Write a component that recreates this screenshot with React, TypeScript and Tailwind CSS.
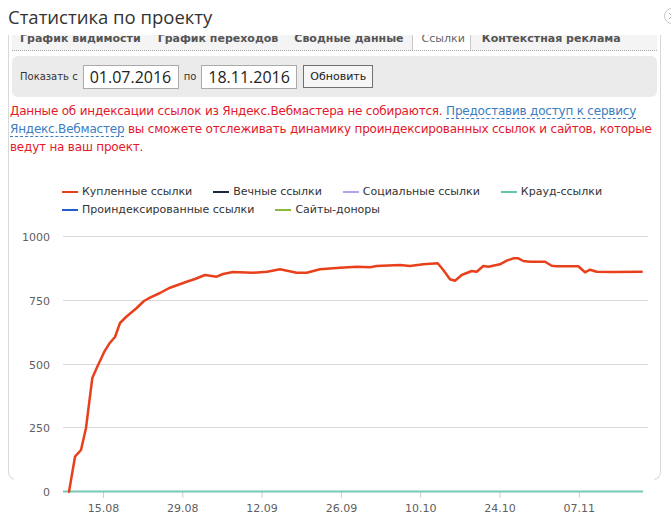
import React from "react";

const LEGEND_ROWS = [
  [
    { label: "Купленные ссылки", color: "bg-[#e8401c]" },
    { label: "Вечные ссылки", color: "bg-[#1c2a40]" },
    { label: "Социальные ссылки", color: "bg-[#b3a4ee]" },
    { label: "Крауд-ссылки", color: "bg-[#5fc6a8]" },
  ],
  [
    { label: "Проиндексированные ссылки", color: "bg-[#1f5fd6]" },
    { label: "Сайты-доноры", color: "bg-[#8db83c]" },
  ],
];

// page coordinates, traced off the chart
const BOUGHT: [number, number][] = [
  [69, 491.7], [75, 456.7], [81, 450], [86, 428], [92.3, 378], [96.7, 368],
  [104.3, 351.7], [110, 342.7], [115, 337], [120, 323], [126, 317], [136.7, 308],
  [144, 301], [150, 297.7], [160, 293], [170, 287.7], [186.7, 281.7], [195, 279],
  [205, 275], [216.7, 276.7], [223, 274], [233, 272], [253, 272.7], [267, 271.7],
  [280, 269.3], [296.7, 272.7], [306.7, 272.7], [320, 269.3], [340, 267.7],
  [356.7, 266.7], [370, 267.3], [376.7, 266], [400, 265], [410, 266], [423.3, 264.3],
  [437.7, 263.3], [443.3, 270], [450, 279.3], [455, 280.7], [461.7, 275], [471.7, 271],
  [476.7, 271.7], [483.3, 266], [488.3, 266.7], [500, 264.3], [506.7, 260.7],
  [513.3, 258.3], [518.3, 258.3], [523.3, 261], [530, 261.7], [545, 261.7],
  [551.7, 265.7], [556.7, 266.3], [578.3, 266.3], [585, 272.3], [590, 269.7],
  [596.7, 271.7], [613.3, 272], [641.7, 271.7],
];

const Y_TICKS = [
  { v: "1000", y: 236.5 },
  { v: "750", y: 300.5 },
  { v: "500", y: 364.5 },
  { v: "250", y: 427.5 },
  { v: "0", y: 491.5 },
];

const X_TICKS = [
  { v: "15.08", x: 103.5 },
  { v: "29.08", x: 182.8 },
  { v: "12.09", x: 262.1 },
  { v: "26.09", x: 341.4 },
  { v: "10.10", x: 420.7 },
  { v: "24.10", x: 500 },
  { v: "07.11", x: 579.3 },
];

function Chart() {
  const line = BOUGHT.map(([x, y]) => `${x},${y}`).join(" ");
  return (
    <svg
      width={640}
      height={291}
      viewBox="14 225 640 291"
      className="block ml-[5px] mt-[6px] shrink-0"
    >
      <rect x={14} y={225} width={640} height={291} fill="#fff" />
      {Y_TICKS.slice(0, 4).map((t) => (
        <line key={t.v} x1={63} x2={648} y1={t.y} y2={t.y} stroke="#d8d8d8" strokeWidth={1} />
      ))}
      {Y_TICKS.map((t) => (
        <text
          key={t.v}
          x={50}
          y={t.y + 4}
          textAnchor="end"
          fontSize={11}
          fill="#606060"
          fontFamily="'DejaVu Sans', Verdana, sans-serif"
        >
          {t.v}
        </text>
      ))}
      {X_TICKS.map((t) => (
        <g key={t.v}>
          <line x1={t.x} x2={t.x} y1={492} y2={498} stroke="#cfcfcf" strokeWidth={1} />
          <text
            x={t.x}
            y={512}
            textAnchor="middle"
            fontSize={11}
            fill="#606060"
            fontFamily="'DejaVu Sans', Verdana, sans-serif"
          >
            {t.v}
          </text>
        </g>
      ))}
      <line x1={63} x2={643} y1={491.5} y2={491.5} stroke="#78c8b8" strokeWidth={2} />
      <polyline
        points={line}
        fill="none"
        stroke="#e8401c"
        strokeWidth={2.5}
        strokeLinejoin="round"
        strokeLinecap="round"
      />
    </svg>
  );
}

export default function App() {
  return (
    <div className="relative w-[671px] h-[516px] overflow-hidden bg-white text-[#333] font-['DejaVu_Sans',Verdana,sans-serif]">
      {/* Title */}
      <div className="h-[35px] pl-[8px] pt-[3px] text-[18.5px] leading-[28px] text-[#333] font-['Open_Sans',sans-serif]">
        Статистика по проекту
      </div>

      {/* Close button */}
      <svg
        width={18}
        height={18}
        viewBox="0 0 18 18"
        className="absolute left-[663px] top-[7px]"
      >
        <circle cx={9} cy={9} r={7.5} fill="#fff" stroke="#c8c8c8" strokeWidth={1} />
        <path d="M6 6 L12 12 M12 6 L6 12" stroke="#b8b8b8" strokeWidth={1} />
      </svg>

      {/* Panel, scrolled so the tab row is cut at its top */}
      <div className="ml-[8px] w-[653px] h-[445px] border-x border-b border-[#d9d9d9] rounded-b-[8px] flex flex-col">
        {/* Tabs */}
        <div className="mx-[3px] h-[16px] shrink-0 flex items-end overflow-hidden bg-[#f4f4f4] border-b border-dotted border-[#aaa] text-[11px] leading-[14px] whitespace-nowrap">
          <div className="ml-[8px] pb-[4px] font-bold text-[#555]">График видимости</div>
          <div className="ml-[17px] pb-[4px] font-bold text-[#555]">График переходов</div>
          <div className="ml-[16px] pb-[4px] font-bold text-[#555]">Сводные данные</div>
          <div className="ml-[8px] h-[17px] -mb-[1px] pl-[9px] pr-[5px] pb-[5px] flex items-end bg-white border-x border-[#c8c8c8] text-[#666]">
            Ссылки
          </div>
          <div className="ml-[11px] pb-[4px] font-bold text-[#555]">Контекстная реклама</div>
        </div>

        {/* Filter bar */}
        <div className="mx-[3px] mt-[5px] h-[41px] shrink-0 bg-[#ebebeb] rounded-[6px] flex items-center pl-[8px] gap-[5px]">
          <span className="text-[10px] text-[#333]">Показать с</span>
          <div className="w-[96px] h-[24px] bg-white border border-[#aaa] pl-[6px] text-[16px] leading-[22px] text-[#222] font-['Open_Sans',sans-serif]">
            01.07.2016
          </div>
          <span className="text-[10px] text-[#333]">по</span>
          <div className="w-[96px] h-[24px] bg-white border border-[#aaa] pl-[6px] text-[16px] leading-[22px] text-[#222] font-['Open_Sans',sans-serif]">
            18.11.2016
          </div>
          <button className="ml-[1px] h-[23px] px-[6px] bg-[#f6f6f6] border border-[#707070] text-[11px] leading-[20px] text-[#222]">
            Обновить
          </button>
        </div>

        {/* Message */}
        <p className="mt-[5px] pl-[1px] pr-[4px] text-[12px] leading-[18px] tracking-[-0.2px] text-[#e3182b]">
          Данные об индексации ссылок из Яндекс.Вебмастера не собираются.{" "}
          <span className="text-[#3b7dbf] border-b border-dashed border-[#3b7dbf]">
            Предоставив доступ к сервису Яндекс.Вебмастер
          </span>{" "}
          вы сможете отслеживать динамику проиндексированных ссылок и сайтов, которые ведут на ваш
          проект.
        </p>

        {/* Legend */}
        <div className="mt-[27px] pl-[53px] flex flex-col">
          {LEGEND_ROWS.map((row, i) => (
            <div key={i} className="flex items-center h-[18px] gap-[21px]">
              {row.map((item) => (
                <div key={item.label} className="flex items-center gap-[4px]">
                  <span className={`w-[16px] h-[2px] ${item.color}`} />
                  <span className="text-[11px] text-[#333] whitespace-nowrap">{item.label}</span>
                </div>
              ))}
            </div>
          ))}
        </div>

        <Chart />
      </div>
    </div>
  );
}
